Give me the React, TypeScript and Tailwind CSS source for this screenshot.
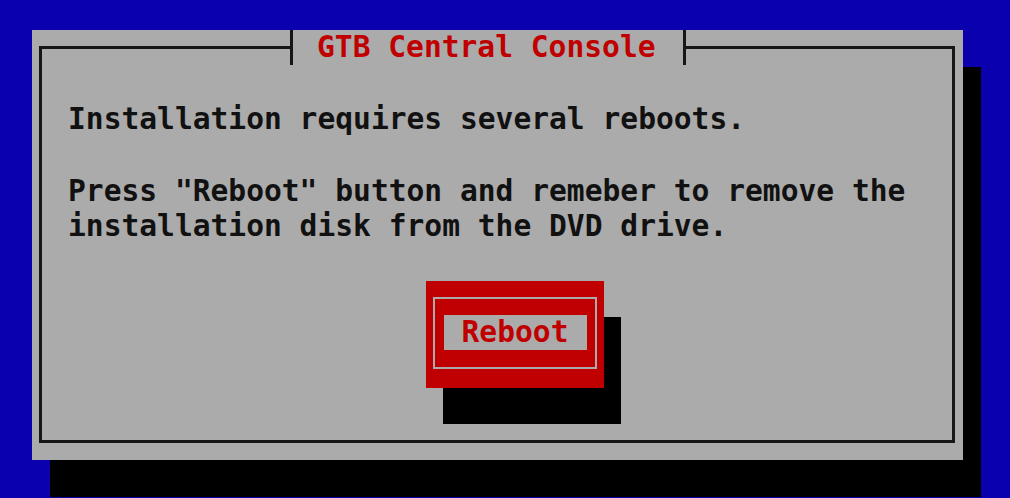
export default function App() {
  const mono = { fontFamily: '"DejaVu Sans Mono", "Liberation Mono", monospace' };

  return (
    <div className="w-[1010px] h-[498px] overflow-hidden bg-[#0a00ae] pl-[32px] pt-[30px]" style={mono}>
      {/* dialog window */}
      <div className="relative w-[931px] h-[430px] bg-[#ababab] pt-[16px] pr-[8px] pb-[17px] pl-[7px] shadow-[18px_37px_0_0_#000]">
        {/* title over the frame */}
        <div className="absolute left-[258px] top-0 h-[35px] flex items-stretch bg-[#ababab]">
          <div className="w-[3px] bg-[#161616]" />
          <div className="pl-[24px] pr-[27px] flex items-center text-[29.6px] leading-none font-bold text-[#c00000]">
            GTB Central Console
          </div>
          <div className="w-[3px] bg-[#161616]" />
        </div>

        <div className="h-full border-[3px] border-[#161616] pl-[26px] pt-[53px] text-[29.6px] leading-[35.6px] font-bold text-[#111]">
          <p className="whitespace-pre">Installation requires several reboots.</p>
          <p className="mt-[36px] whitespace-pre">
            Press "Reboot" button and remeber to remove the
            <br />
            installation disk from the DVD drive.
          </p>

          <div className="mt-[36px] ml-[358px] w-[178px] h-[107px] bg-[#c00000] pt-[16px] px-[7px] pb-[19px] shadow-[17px_36px_0_0_#000]">
            <div className="h-full border-2 border-[#ababab] flex items-center justify-center">
              <div className="w-[143px] h-[35px] bg-[#ababab] flex items-center justify-center text-[#c00000] leading-none">
                Reboot
              </div>
            </div>
          </div>
        </div>
      </div>
    </div>
  );
}
